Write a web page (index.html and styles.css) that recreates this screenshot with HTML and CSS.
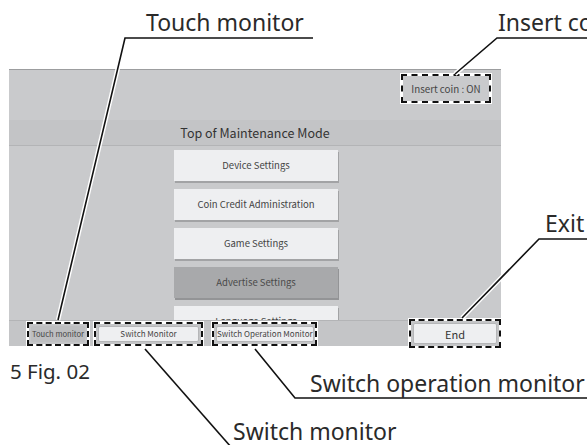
FILE: index.html
```html
<!DOCTYPE html>
<html lang="en">
<head>
    <meta charset="UTF-8">
    <meta name="viewport" content="width=device-width, initial-scale=1.0">
    <title>Top of Maintenance Mode - Fig. 02</title>
    <link rel="stylesheet" href="styles.css">
</head>
<body>

<div class="figure">
    <!-- 画面 -->
    <div class="screen">
        <div class="top">
            <div class="mark coin">Insert coin : ON</div>
        </div>
        <div class="title">Top of Maintenance Mode</div>
        <div class="menu">
            <div class="btn">Device Settings</div>
            <div class="btn">Coin Credit Administration</div>
            <div class="btn">Game Settings</div>
            <div class="btn active">Advertise Settings</div>
            <div class="btn">Language Settings</div>
        </div>
        <div class="footer">
            <div class="mark m-touch"><div class="fbtn dark">Touch monitor</div></div>
            <div class="mark m-switch"><div class="fbtn">Switch Monitor</div></div>
            <div class="mark m-op"><div class="fbtn">Switch Operation Monitor</div></div>
            <div class="mark m-end"><div class="fbtn end">End</div></div>
        </div>
    </div>

    <div class="caption">5 Fig. 02</div>

    <!-- 引き出し線とラベル -->
    <svg class="callouts" width="587" height="445" viewBox="0 0 587 445">
        <g class="halo">
            <polyline points="313,38 125,38 58,320"/>
            <polyline points="587,38 497,38 455,74"/>
            <polyline points="587,239 539,239 462,318"/>
            <polyline points="255,349 295,398 587,398"/>
            <polyline points="145,349 231,447"/>
        </g>
        <g class="lines">
            <polyline points="313,38 125,38 58,320"/>
            <polyline points="587,38 497,38 455,74"/>
            <polyline points="587,239 539,239 462,318"/>
            <polyline points="255,349 295,398 587,398"/>
            <polyline points="145,349 231,447"/>
        </g>
        <text x="146" y="31">Touch monitor</text>
        <text x="498" y="31">Insert coin : ON</text>
        <text x="545" y="232">Exit</text>
        <text x="310" y="392">Switch operation monitor</text>
        <text x="233" y="440">Switch monitor</text>
    </svg>
</div>

</body>
</html>
```

FILE: styles.css
```css
body {
    margin: 0;
    background: #fff;
    overflow: hidden;
}
.figure {
    position: relative;
    width: 587px;
    height: 445px;
    overflow: hidden;
    padding: 69px 0 0 9px;
    box-sizing: border-box;
}
.screen {
    width: 492px;
    height: 277px;
    display: flex;
    flex-direction: column;
    background: #c9cacc;
    border-top: 1px solid #9c9d9f;
    box-sizing: border-box;
    font-family: "Noto Sans CJK JP", "Noto Sans", sans-serif;
    color: #3a3a3a;
}
.top {
    height: 50px;
    display: flex;
    justify-content: flex-end;
    align-items: flex-start;
    padding: 4px 10px 0 0;
    box-sizing: border-box;
}
.title {
    height: 26px;
    background: #c3c4c6;
    border-bottom: 1px solid #b3b4b6;
    box-sizing: border-box;
    font-size: 12.5px;
    line-height: 25px;
    text-align: center;
    color: #333;
}
.menu {
    flex: 1;
    display: flex;
    flex-direction: column;
    align-items: center;
    gap: 8px;
    padding-top: 4px;
    overflow: hidden;
}
.btn {
    flex: none;
    width: 164px;
    height: 31px;
    margin-left: 2px;
    background: #eeeff1;
    box-shadow: 1px 2px 0 #a2a3a5;
    font-size: 9.5px;
    line-height: 30px;
    text-align: center;
    color: #444;
}
.btn.active {
    background: #a8a9ab;
    box-shadow: 1px 2px 0 #939496;
    color: #4a4a4a;
}
.footer {
    height: 26px;
    flex: none;
    display: flex;
    align-items: center;
    padding-left: 18px;
    background: #c4c5c7;
    border-top: 1px solid #b3b4b6;
    box-sizing: border-box;
}

/* 点線の枠 */
.mark {
    border: 2px dashed #111;
    background: linear-gradient(#c4c5c7, #c4c5c7) padding-box, #fff;
    box-shadow: 0 0 0 1px #fff;
    padding: 2px;
    box-sizing: border-box;
    display: flex;
}
.coin {
    width: 90px;
    height: 29px;
    background: linear-gradient(#c9cacc, #c9cacc) padding-box, #fff;
    align-items: center;
    justify-content: center;
    font-size: 9.8px;
    color: #444;
}
.m-touch { width: 62px; height: 24px; }
.m-switch { width: 109px; height: 24px; margin-left: 5px; }
.m-op { width: 105px; height: 24px; margin-left: 9px; }
.m-end { width: 92px; height: 29px; margin-left: auto; }

.fbtn {
    flex: 1;
    display: flex;
    align-items: center;
    justify-content: center;
    background: #eeeff1;
    border: 1px solid #b5b6b8;
    border-radius: 2px;
    font-size: 8px;
    color: #444;
    white-space: nowrap;
}
.fbtn.dark {
    background: #bdbec0;
    border-color: #bdbec0;
    font-size: 7.6px;
}
.fbtn.end {
    font-size: 11px;
    color: #333;
}

.caption {
    margin: 15px 0 0 1px;
    font-family: "Noto Sans", sans-serif;
    font-size: 20.5px;
    line-height: 20px;
    color: #2a2a2a;
}

/* 引き出し線 */
.callouts {
    position: absolute;
    left: 0;
    top: 0;
}
.callouts polyline {
    fill: none;
    stroke-linejoin: miter;
}
.halo polyline {
    stroke: #fff;
    stroke-width: 4.5;
}
.lines polyline {
    stroke: #111;
    stroke-width: 1.6;
}
.callouts text {
    font-family: "Noto Sans", sans-serif;
    font-size: 23px;
    fill: #2a2a2a;
}
```
